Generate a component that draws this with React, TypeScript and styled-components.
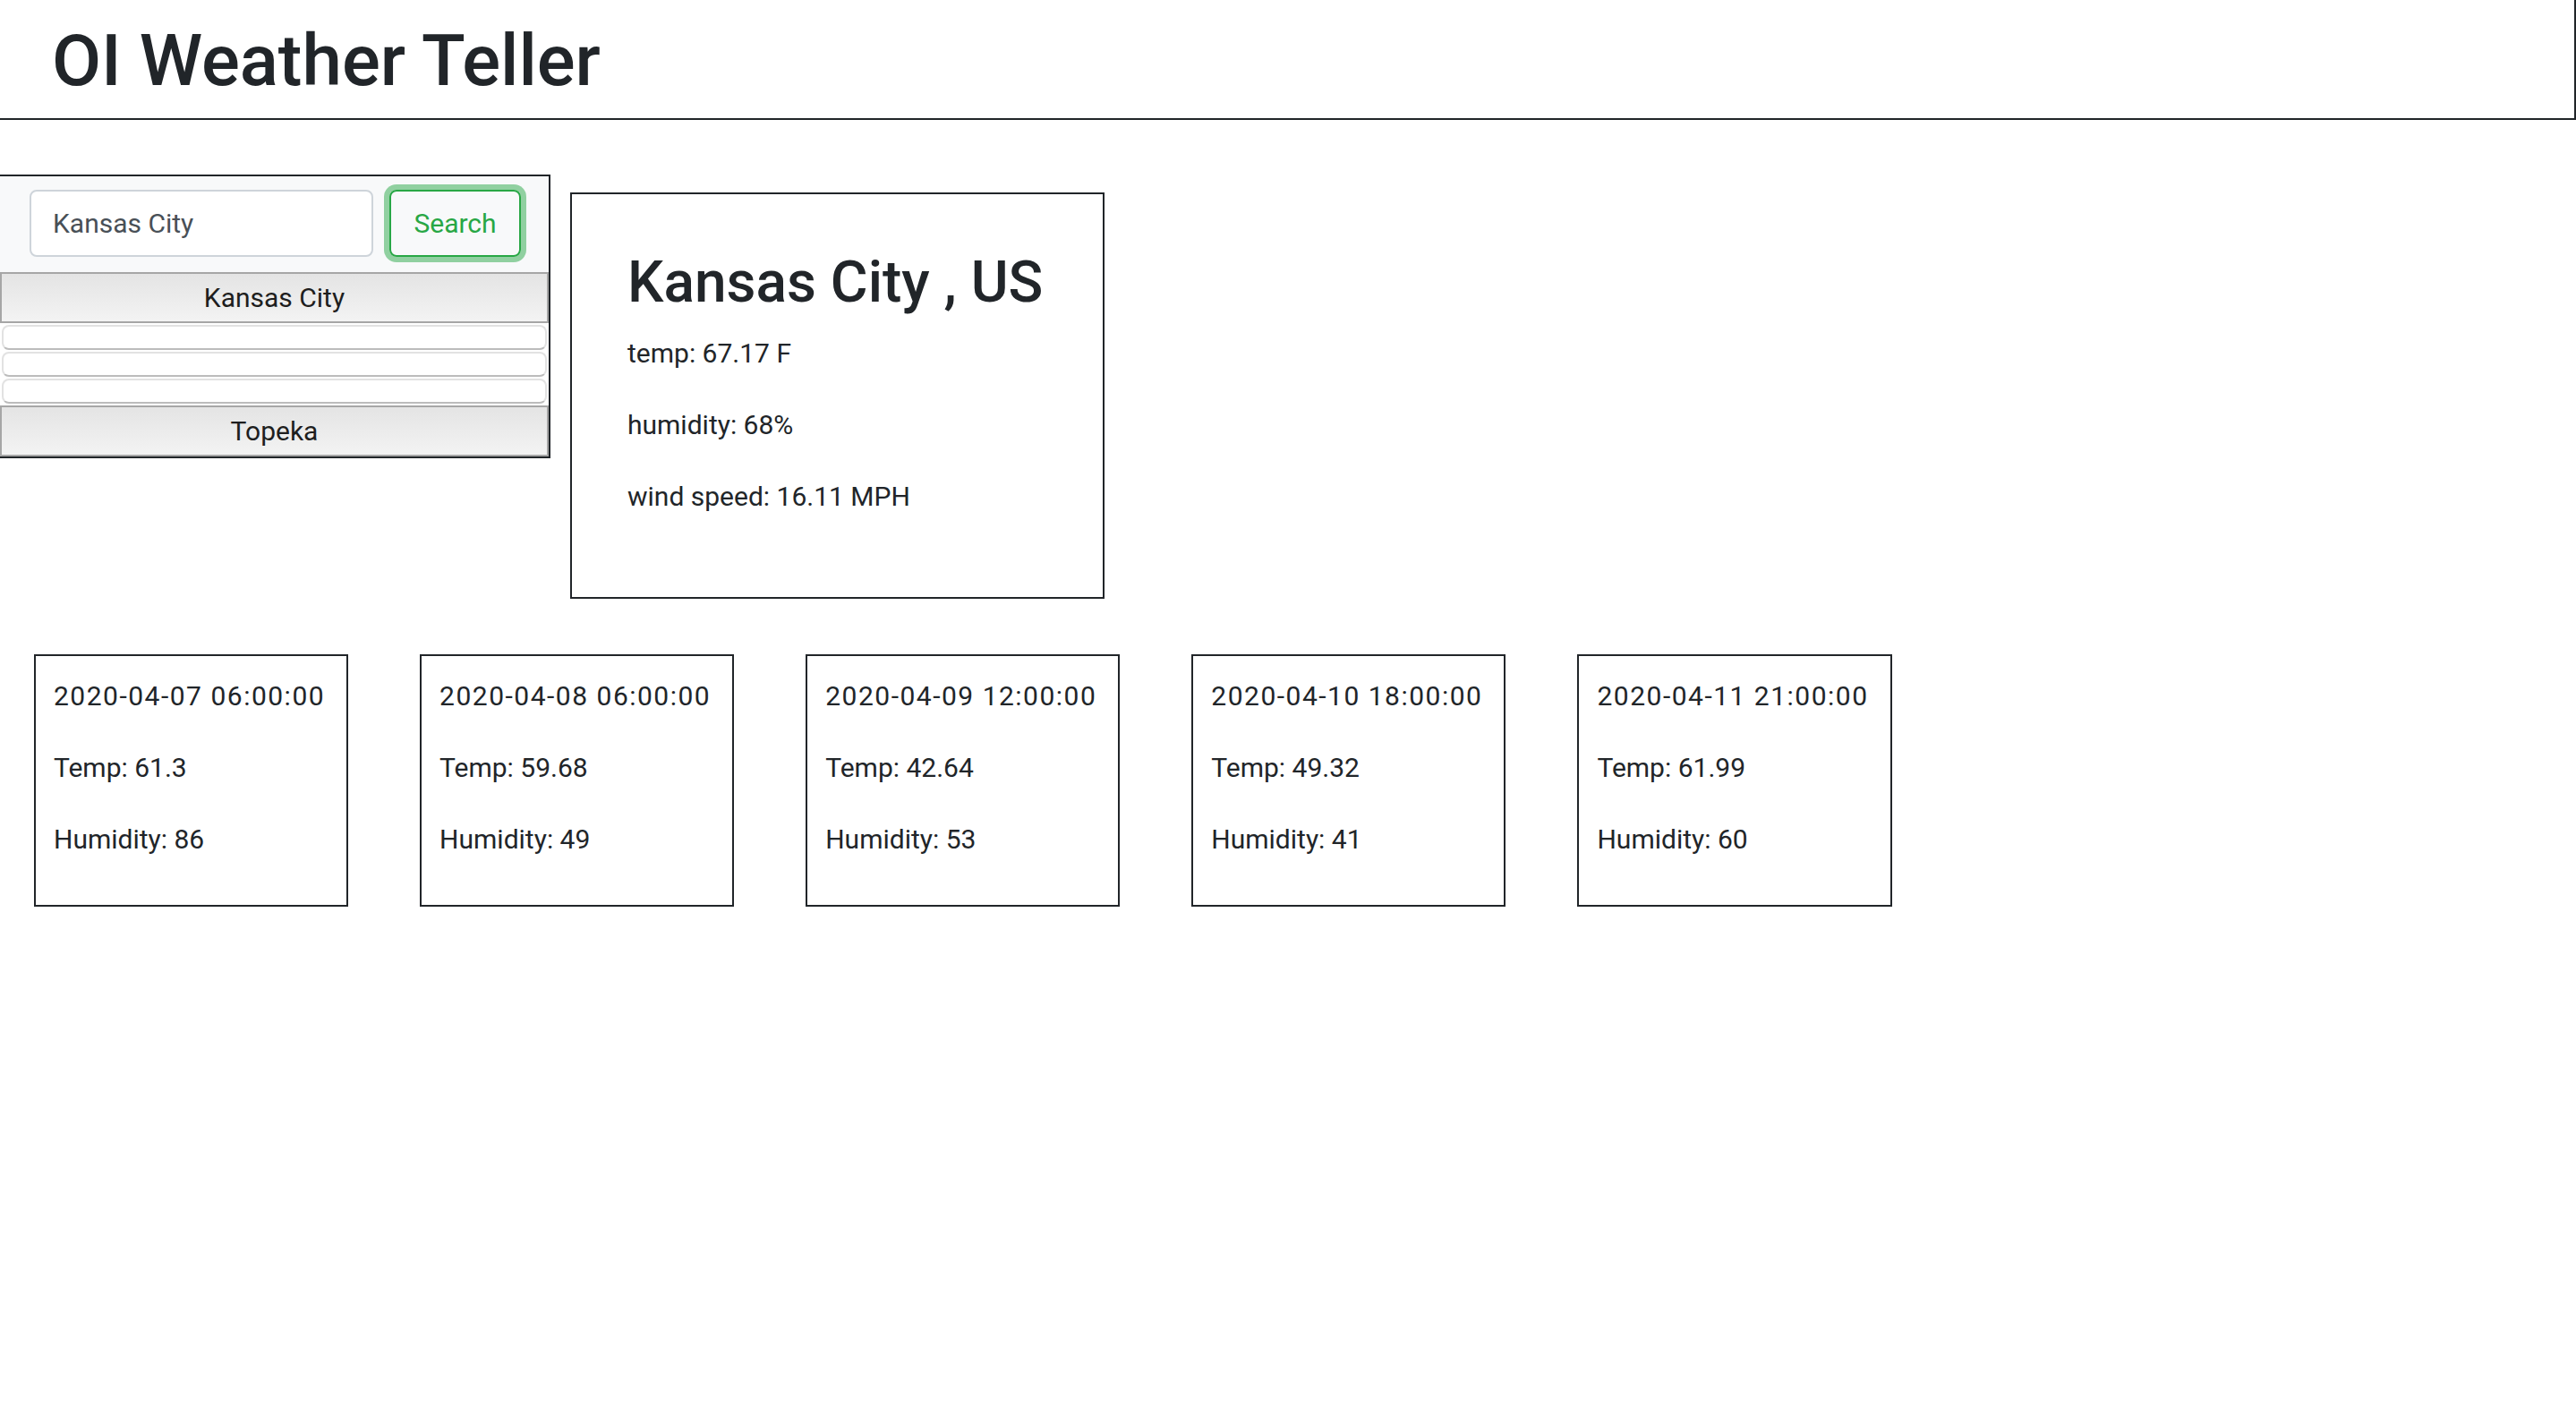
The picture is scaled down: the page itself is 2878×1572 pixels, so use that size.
import styled, { createGlobalStyle } from 'styled-components'

const GlobalStyle = createGlobalStyle`
  * {
    box-sizing: border-box;
  }

  body {
    margin: 0;
    background: #fff;
    color: #212529;
    font-family: Roboto, "Liberation Sans", Arial, sans-serif;
  }
`

const Header = styled.header`
  padding: 20px 0 16px 58px;
  border-right: 2px solid #212529;
  border-bottom: 2px solid #212529;
`

const Title = styled.h1`
  margin: 0;
  font-size: 80px;
  font-weight: 500;
  line-height: 1.2;
`

const Main = styled.main`
  display: flex;
  align-items: flex-start;
  gap: 22px;
  padding-top: 61px;
`

// the panel's left edge sits flush with the window, so only three sides show
const SearchPanel = styled.aside`
  width: 615px;
  border: 2px solid #212529;
  border-left: none;
`

const SearchForm = styled.form`
  display: flex;
  gap: 18px;
  padding: 15px 31px 17px 33px;
  background: #f8f9fa;
`

const SearchInput = styled.input`
  flex: 1;
  min-width: 0;
  height: 75px;
  padding: 0 24px;
  border: 2px solid #ced4da;
  border-radius: 8px;
  background: #fff;
  color: #495057;
  font-family: inherit;
  font-size: 30px;
  outline: none;
`

const SearchButton = styled.button`
  width: 147px;
  height: 75px;
  border: 2px solid #28a745;
  border-radius: 8px;
  background: transparent;
  color: #28a745;
  font-family: inherit;
  font-size: 30px;
  box-shadow: 0 0 0 6px rgba(40, 167, 69, 0.5);
  cursor: pointer;
`

const CityList = styled.div`
  display: flex;
  flex-direction: column;
  gap: 2px;
`

const CityButton = styled.button<{ $empty?: boolean }>`
  display: block;
  width: ${p => (p.$empty ? 'calc(100% - 4px)' : '100%')};
  height: ${p => (p.$empty ? '28px' : '57px')};
  margin: ${p => (p.$empty ? '0 2px' : '0')};
  padding: 0;
  border: 2px solid ${p => (p.$empty ? '#e2e2e2' : '#a6a6a6')};
  border-bottom-color: ${p => (p.$empty ? '#bcbcbc' : '#a6a6a6')};
  border-radius: ${p => (p.$empty ? '8px' : '0')};
  background: ${p => (p.$empty ? '#fff' : 'linear-gradient(#e4e4e4, #f3f3f3)')};
  color: #1e1e1e;
  font-family: inherit;
  font-size: 30px;
  cursor: pointer;
`

const CurrentCard = styled.section`
  width: 597px;
  margin-top: 20px;
  padding: 61px 62px 56px;
  border: 2px solid #212529;
`

const CityName = styled.h2`
  margin: 0 0 16px;
  font-size: 64px;
  font-weight: 500;
  line-height: 1.2;
  white-space: nowrap;
`

const Stat = styled.p`
  margin: 0 0 32px;
  font-size: 30px;
  line-height: 48px;
  white-space: nowrap;
`

const ForecastRow = styled.div`
  display: flex;
  align-items: flex-start;
  gap: 80px;
  margin-top: 62px;
  padding-left: 38px;
`

const ForecastCard = styled.div`
  padding: 21px 24px 17px 20px;
  border: 2px solid #212529;
`

const ForecastDate = styled(Stat)`
  letter-spacing: 1.5px;
`

const history = ['Kansas City', '', '', '', 'Topeka']

const forecast = [
  { date: '2020-04-07 06:00:00', temp: '61.3', humidity: 86 },
  { date: '2020-04-08 06:00:00', temp: '59.68', humidity: 49 },
  { date: '2020-04-09 12:00:00', temp: '42.64', humidity: 53 },
  { date: '2020-04-10 18:00:00', temp: '49.32', humidity: 41 },
  { date: '2020-04-11 21:00:00', temp: '61.99', humidity: 60 },
]

export default function App() {
  return (
    <>
      <GlobalStyle />
      <Header>
        <Title>OI Weather Teller</Title>
      </Header>
      <Main>
        <SearchPanel>
          <SearchForm onSubmit={e => e.preventDefault()}>
            <SearchInput defaultValue="Kansas City" />
            <SearchButton type="submit">Search</SearchButton>
          </SearchForm>
          <CityList>
            {history.map((city, i) => (
              <CityButton key={i} $empty={!city}>
                {city}
              </CityButton>
            ))}
          </CityList>
        </SearchPanel>
        <CurrentCard>
          <CityName>Kansas City , US</CityName>
          <Stat>temp: 67.17 F</Stat>
          <Stat>humidity: 68%</Stat>
          <Stat>wind speed: 16.11 MPH</Stat>
        </CurrentCard>
      </Main>
      <ForecastRow>
        {forecast.map(day => (
          <ForecastCard key={day.date}>
            <ForecastDate>{day.date}</ForecastDate>
            <Stat>Temp: {day.temp}</Stat>
            <Stat>Humidity: {day.humidity}</Stat>
          </ForecastCard>
        ))}
      </ForecastRow>
    </>
  )
}
